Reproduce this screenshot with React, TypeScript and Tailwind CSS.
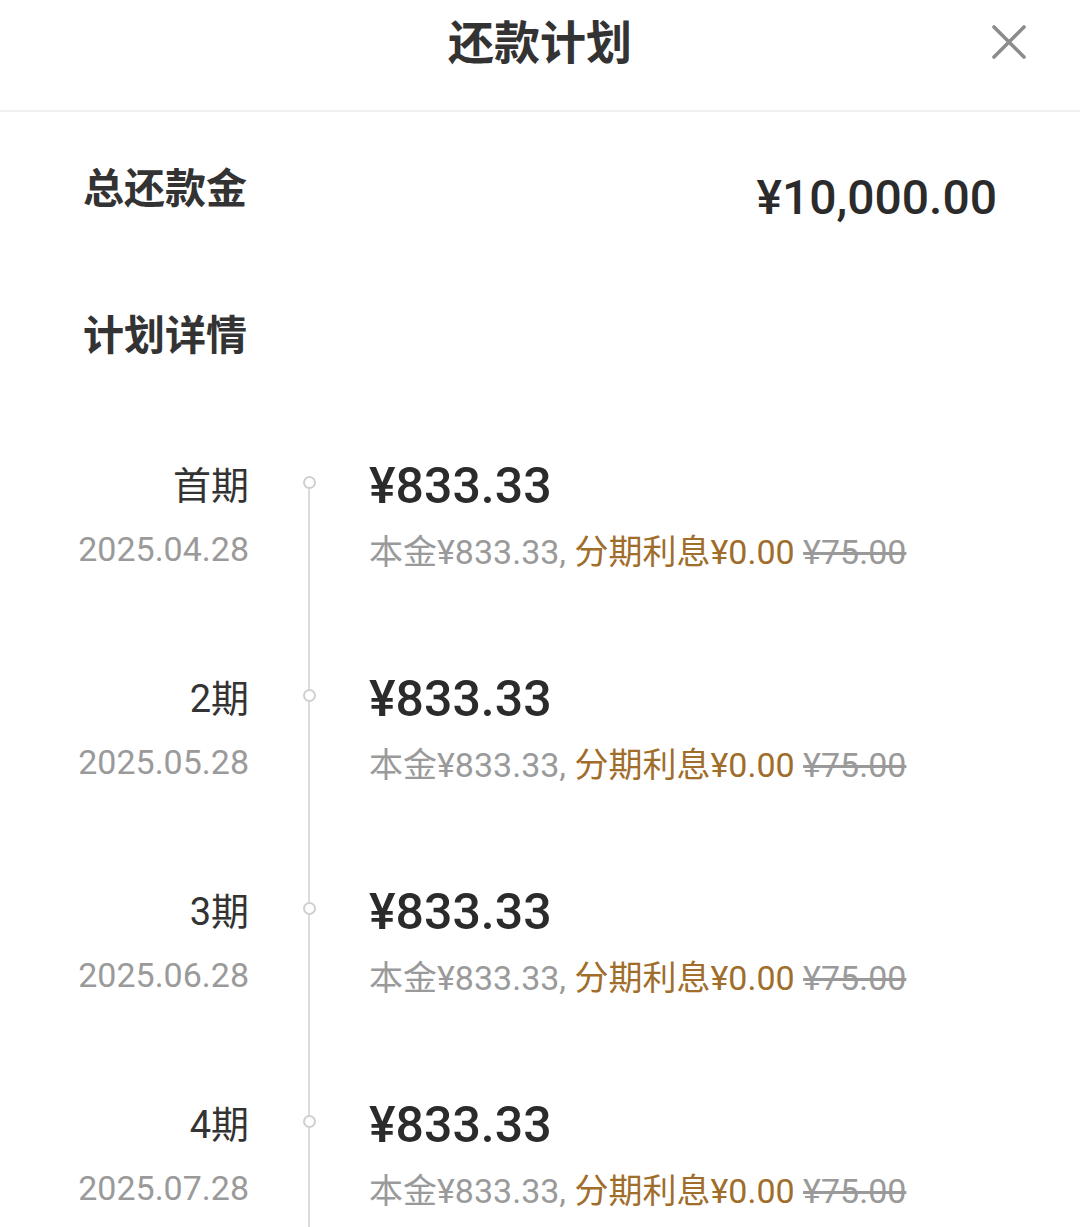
import React from 'react';

interface Period {
  label: string;
  date: string;
}

const periods: Period[] = [
  { label: '首期', date: '2025.04.28' },
  { label: '2期', date: '2025.05.28' },
  { label: '3期', date: '2025.06.28' },
  { label: '4期', date: '2025.07.28' },
];

const fontStack = "font-['Roboto','Noto_Sans_CJK_SC',sans-serif]";

export default function App() {
  return (
    <div className={`h-[1227px] w-[1080px] overflow-hidden bg-white text-[#333] ${fontStack}`}>
      {/* Header */}
      <header className="relative flex h-[112px] justify-center border-b-2 border-[#f0f0f0] pt-[13px]">
        <h1 className="text-[46px] font-bold leading-[60px] text-[#333]">还款计划</h1>
        <button className="absolute right-[54px] top-[25px] h-[34px] w-[34px]">
          <svg viewBox="0 0 34 34" width="34" height="34" fill="none" stroke="#8c8c8c" strokeWidth="3.6" strokeLinecap="round">
            <path d="M2 2 L32 32 M32 2 L2 32" />
          </svg>
        </button>
      </header>

      {/* Total */}
      <div className="flex items-start justify-between px-[83px] pt-[57px]">
        <span className="text-[41px] font-bold leading-[41px]">总还款金</span>
        <span className="mt-[5px] text-[48px] font-medium leading-[48px] text-[#2b2b2b]">¥10,000.00</span>
      </div>

      <div className="px-[83px] pt-[94px]">
        <span className="text-[41px] font-bold leading-[41px]">计划详情</span>
      </div>

      {/* Timeline */}
      <div className="flex flex-col pl-[78px] pt-[99px]">
        {periods.map((p, i) => (
          <div key={p.label} className="flex h-[213px]">
            <div className="flex w-[171px] flex-col items-end">
              <span className="text-[38px] leading-[60px] text-[#333]">{p.label}</span>
              <span className="mt-[16px] text-[34px] leading-[34px] text-[#9a9a9a]">{p.date}</span>
            </div>
            <div className="flex w-[120px] flex-col items-center">
              <div className={i === 0 ? 'h-[20px] w-[2px]' : 'h-[20px] w-[2px] bg-[#dcdcdc]'} />
              <div className="h-[13px] w-[13px] shrink-0 rounded-full border-2 border-[#cfcfcf] bg-white" />
              <div className="w-[2px] flex-1 bg-[#dcdcdc]" />
            </div>
            <div className="flex flex-col">
              <span className="text-[50px] font-medium leading-[60px] text-[#2b2b2b]">¥833.33</span>
              <span className="mt-[19px] whitespace-nowrap text-[34px] leading-[34px] text-[#9a9a9a]">
                本金¥833.33, <span className="text-[#a06d2b]">分期利息¥0.00</span>{' '}
                <span className="line-through">¥75.00</span>
              </span>
            </div>
          </div>
        ))}
      </div>
    </div>
  );
}
